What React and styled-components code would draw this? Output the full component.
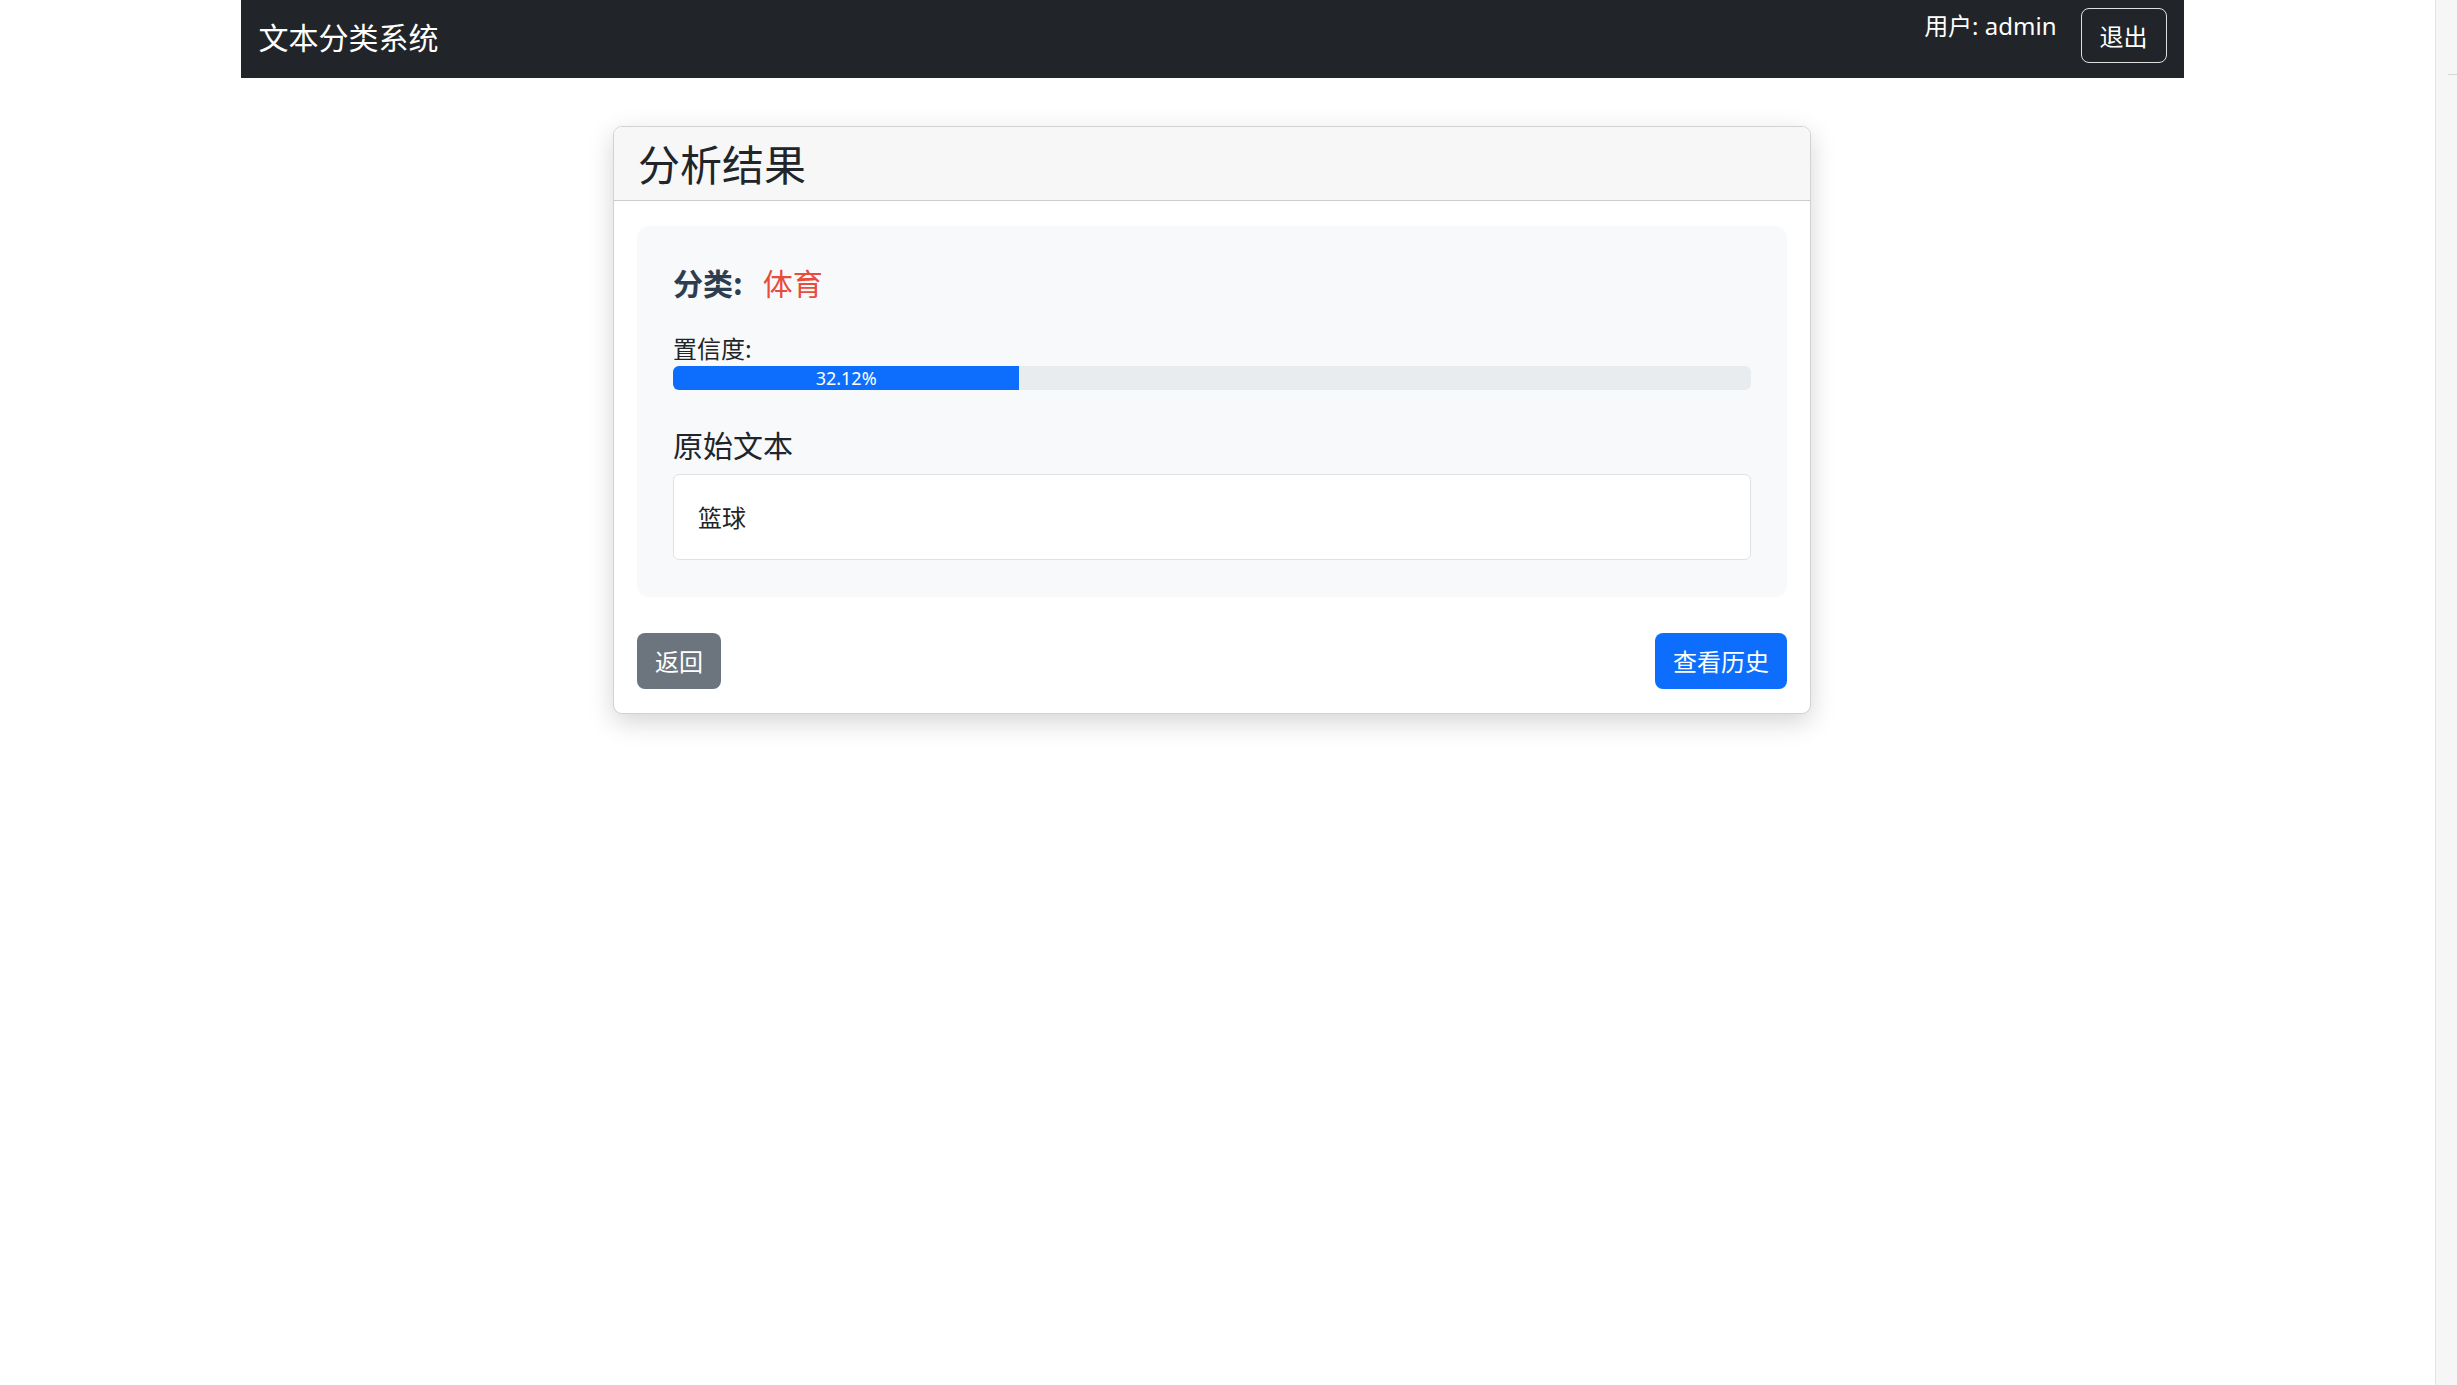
import React from "react";
import styled, { createGlobalStyle } from "styled-components";

const GlobalStyle = createGlobalStyle`
  html, body {
    margin: 0;
    padding: 0;
    background: #ffffff;
  }
  body {
    font-family: "Noto Sans", "Noto Sans CJK SC", sans-serif;
    color: #212529;
    font-size: 24px;
    line-height: 1.5;
  }
  * { box-sizing: border-box; }
`;

const Page = styled.div`
  display: flex;
  min-height: 100vh;
`;

const Main = styled.main`
  flex: 1;
  padding-right: 11px;
`;

const SideStrip = styled.aside`
  width: 22px;
  flex-shrink: 0;
  background: #f6f6f6;
  border-left: 1px solid #e4e4e4;
  display: flex;
  flex-direction: column;
  align-items: flex-end;
`;

const StripRule = styled.div`
  margin-top: 74px;
  width: 9px;
  height: 1px;
  background: #d8d8d8;
`;

const Navbar = styled.nav`
  width: 1943px;
  height: 78px;
  margin: 0 auto;
  background: #212529;
  display: flex;
  align-items: center;
  justify-content: space-between;
  padding: 0 17px 0 18px;
`;

const Brand = styled.div`
  color: #ffffff;
  font-size: 30px;
  line-height: 36px;
  margin-bottom: 7px;
  font-family: "Noto Sans CJK SC", sans-serif;
`;

const NavRight = styled.div`
  display: flex;
  align-items: flex-start;
  align-self: flex-start;
  padding-top: 8px;
  gap: 24px;
`;

const UserText = styled.span`
  color: #ffffff;
  font-size: 24px;
  line-height: 36px;
`;

const OutlineButton = styled.button`
  height: 55px;
  padding: 0 18px;
  border: 1px solid rgba(255, 255, 255, 0.85);
  border-radius: 8px;
  background: transparent;
  color: #ffffff;
  font-family: "Noto Sans CJK SC", sans-serif;
  font-size: 24px;
  line-height: 36px;
  cursor: pointer;
`;

const Card = styled.section`
  width: 1198px;
  margin: 48px auto 0;
  border: 1px solid rgba(0, 0, 0, 0.175);
  border-radius: 9px;
  background: #ffffff;
  box-shadow: 0 8px 26px rgba(0, 0, 0, 0.17);
  overflow: hidden;
`;

const CardHeader = styled.header`
  background: #f7f7f7;
  border-bottom: 1px solid rgba(0, 0, 0, 0.175);
  padding: 11px 24px 12px;
`;

const CardTitle = styled.h3`
  margin: 0;
  font-size: 42px;
  line-height: 50px;
  font-weight: 400;
  font-family: "Noto Sans CJK SC", sans-serif;
  color: #212529;
`;

const CardBody = styled.div`
  padding: 25px 23px 24px;
`;

const ResultBox = styled.div`
  background: #f8f9fa;
  border-radius: 12px;
  padding: 38px 36px 37px;
  margin-bottom: 36px;
`;

const CategoryLine = styled.h5`
  margin: 0 0 30px;
  font-size: 30px;
  line-height: 36px;
  font-weight: 400;
  font-family: "Noto Sans CJK SC", sans-serif;
`;

const CategoryLabel = styled.strong`
  color: #2c3e50;
  font-weight: 700;
`;

const CategoryValue = styled.span`
  color: #e74c3c;
  margin-left: 20px;
`;

const FieldLabel = styled.div`
  font-size: 24px;
  line-height: 36px;
  font-family: "Noto Sans CJK SC", sans-serif;
`;

const Progress = styled.div`
  height: 24px;
  background: #e9ecef;
  border-radius: 6px;
  overflow: hidden;
  margin-bottom: 36px;
  display: flex;
`;

const ProgressFill = styled.div`
  background: #0d6efd;
  color: #ffffff;
  font-size: 18px;
  line-height: 24px;
  text-align: center;
  white-space: nowrap;
`;

const SectionTitle = styled.h5`
  margin: 0 0 12px;
  font-size: 30px;
  line-height: 36px;
  font-weight: 400;
  font-family: "Noto Sans CJK SC", sans-serif;
`;

const TextBox = styled.div`
  background: #ffffff;
  border: 1px solid #dee2e6;
  border-radius: 6px;
  padding: 24px 24px;
  font-size: 24px;
  line-height: 36px;
  font-family: "Noto Sans CJK SC", sans-serif;
`;

const Actions = styled.div`
  display: flex;
  justify-content: space-between;
  align-items: center;
`;

const Button = styled.button`
  height: 56px;
  padding: 0 18px;
  border: none;
  border-radius: 8px;
  background: ${(p) => (p.$variant === "primary" ? "#0d6efd" : "#6c757d")};
  color: #ffffff;
  font-family: "Noto Sans CJK SC", sans-serif;
  font-size: 24px;
  line-height: 36px;
  cursor: pointer;
`;

const result = {
  category: "体育",
  confidence: 0.3212,
  text: "篮球",
};

export default function App() {
  const pct = (result.confidence * 100).toFixed(2);
  return (
    <>
      <GlobalStyle />
      <Page>
        <Main>
          <Navbar>
            <Brand>文本分类系统</Brand>
            <NavRight>
              <UserText>用户: admin</UserText>
              <OutlineButton>退出</OutlineButton>
            </NavRight>
          </Navbar>
          <Card>
            <CardHeader>
              <CardTitle>分析结果</CardTitle>
            </CardHeader>
            <CardBody>
              <ResultBox>
                <CategoryLine>
                  <CategoryLabel>分类:</CategoryLabel>
                  <CategoryValue>{result.category}</CategoryValue>
                </CategoryLine>
                <FieldLabel>置信度:</FieldLabel>
                <Progress>
                  <ProgressFill style={{ width: `${pct}%` }}>{pct}%</ProgressFill>
                </Progress>
                <SectionTitle>原始文本</SectionTitle>
                <TextBox>{result.text}</TextBox>
              </ResultBox>
              <Actions>
                <Button $variant="secondary">返回</Button>
                <Button $variant="primary">查看历史</Button>
              </Actions>
            </CardBody>
          </Card>
        </Main>
        <SideStrip>
          <StripRule />
        </SideStrip>
      </Page>
    </>
  );
}
